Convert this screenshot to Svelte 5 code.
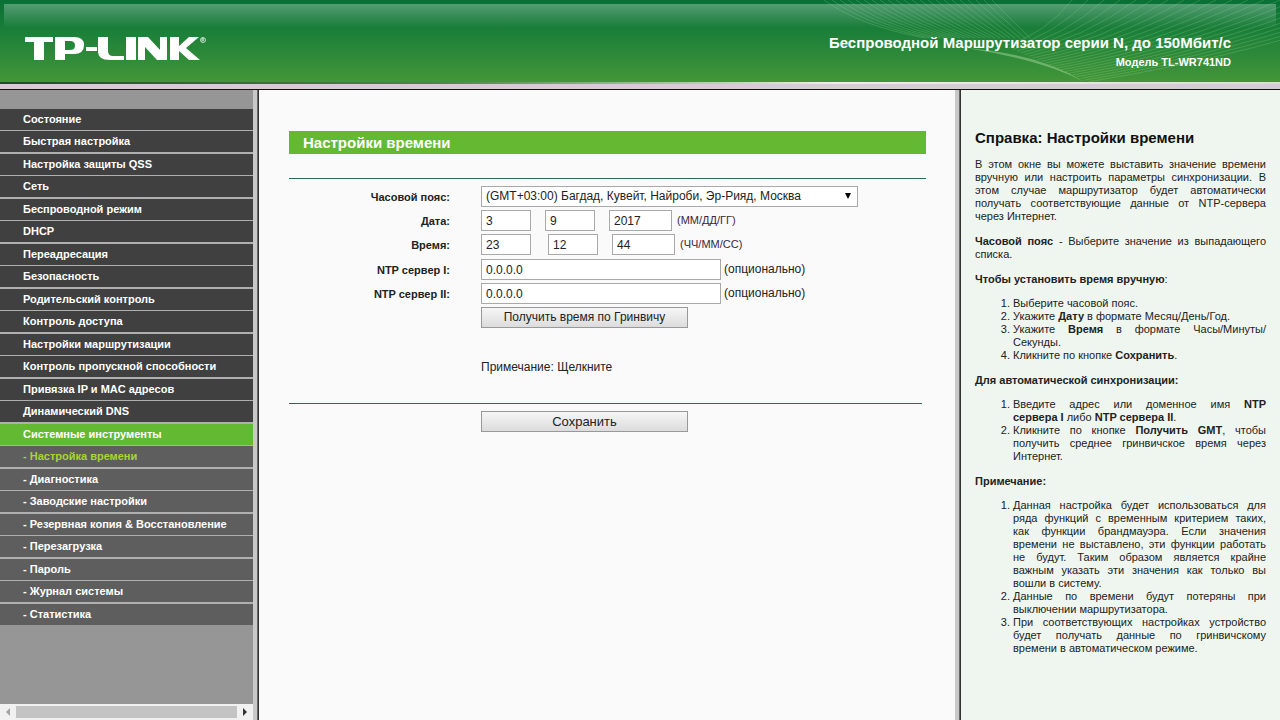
<script>
  const menu = [
    'Состояние', 'Быстрая настройка', 'Настройка защиты QSS', 'Сеть', 'Беспроводной режим', 'DHCP',
    'Переадресация', 'Безопасность', 'Родительский контроль', 'Контроль доступа',
    'Настройки маршрутизации', 'Контроль пропускной способности', 'Привязка IP и MAC адресов',
    'Динамический DNS', 'Системные инструменты'
  ];
  const submenu = [
    'Настройка времени', 'Диагностика', 'Заводские настройки', 'Резервная копия & Восстановление',
    'Перезагрузка', 'Пароль', 'Журнал системы', 'Статистика'
  ];
  const strands = Array.from({ length: 22 }, (_, i) => i);
</script>

<div class="page">
  <header>
    <div class="gloss"></div>
    <svg class="waves" viewBox="0 0 480 82" aria-hidden="true">
      <path class="fill" d="M165 48 C205 51 250 60 284 82 C262 70 220 56 165 48Z" />
      {#each strands as i}
        <path d={`M${24 + i * 8} 0 Q${60 + i * 7} ${26 - i / 2} ${125 + i * 5} 38`} />
        <path d={`M${205 + i * 4} ${46 + i * 1.7} Q${245 + i * 10} ${34 + i} ${272 + i * 16} 0`} />
      {/each}
    </svg>
    <svg class="logo" viewBox="0 0 182 26" role="img" aria-label="TP-LINK">
      <g fill="#fff">
        <path d="M0 1H28V6H19V24H9V6H0Z" />
        <path fill-rule="evenodd" d="M30 1H49Q59 1 59 9Q59 18 49 18H40V24H30ZM40 5V14H45Q50 14 50 9.500Q50 5 45 5Z" />
        <path d="M61 11H72V15H61Z" />
        <path d="M73 1H83V15Q83 20 88 20H99V24H85Q73 24 73 15Z" />
        <path d="M101 1H111V24H101Z" />
        <path d="M113 1H123L135 14V1H142V24H132L120 11V24H113Z" />
        <path d="M145 1H154V10L164 1H174L161 12L175 24H164L154 15V24H145Z" />
      </g>
      <circle cx="178" cy="4" r="2.500" fill="none" stroke="#fff" stroke-width=".7" />
      <path d="M177 5.500V2.500H178.500V4H177M178 4L179 5.500" fill="none" stroke="#fff" stroke-width=".6" />
    </svg>
    <div class="product">
      <strong class="name">Беспроводной Маршрутизатор серии N, до 150Мбит/с</strong>
      <strong class="model">Модель TL-WR741ND</strong>
    </div>
  </header>

  <div class="body">
    <aside>
      <nav>
        {#each menu as item, i}
          <a href="#menu" class:active={i === menu.length - 1}>{item}</a>
        {/each}
        {#each submenu as item, i}
          <a href="#submenu" class="sub" class:current={i === 0}>- {item}</a>
        {/each}
      </nav>
      <div class="scroll">
        <button aria-label="Влево"><svg width="4" height="8"><path d="M4 0V8L0 4Z" fill="#a3a3a3" /></svg></button>
        <div class="thumb"></div>
        <button aria-label="Вправо"><svg width="4" height="8"><path d="M0 0V8L4 4Z" fill="#333" /></svg></button>
      </div>
    </aside>
    <div class="divider"></div>

    <main>
      <h1>Настройки времени</h1>
      <form onsubmit={(e) => e.preventDefault()}>
        <div class="row">
          <label for="zone">Часовой пояс:</label>
          <div class="select">
            <select id="zone"><option>(GMT+03:00) Багдад, Кувейт, Найроби, Эр-Рияд, Москва</option></select>
            <svg width="6" height="6" aria-hidden="true"><path d="M0 0H6L3 6Z" /></svg>
          </div>
        </div>
        <div class="row">
          <label for="month">Дата:</label>
          <div class="fields">
            <div class="parts">
              <input id="month" value="3" />
              <input aria-label="День" value="9" />
              <input class="wide" aria-label="Год" value="2017" />
            </div>
            <span class="format">(ММ/ДД/ГГ)</span>
          </div>
        </div>
        <div class="row">
          <label for="hour">Время:</label>
          <div class="fields">
            <div class="parts time">
              <input id="hour" value="23" />
              <input aria-label="Минуты" value="12" />
              <input class="wide" aria-label="Секунды" value="44" />
            </div>
            <span class="format">(ЧЧ/ММ/СС)</span>
          </div>
        </div>
        <div class="row">
          <label for="ntp1">NTP сервер I:</label>
          <div class="fields"><input id="ntp1" class="server" value="0.0.0.0" /><span>(опционально)</span></div>
        </div>
        <div class="row">
          <label for="ntp2">NTP сервер II:</label>
          <div class="fields"><input id="ntp2" class="server" value="0.0.0.0" /><span>(опционально)</span></div>
        </div>
        <div class="row"><button class="push" type="button">Получить время по Гринвичу</button></div>
        <p class="note">Примечание: Щелкните</p>
        <hr />
        <div class="row"><button class="push save" type="submit">Сохранить</button></div>
      </form>
    </main>
    <div class="divider"></div>

    <section class="help">
      <h2>Справка: Настройки времени</h2>
      <p>В этом окне вы можете выставить значение времени вручную или настроить параметры синхронизации. В этом случае маршрутизатор будет автоматически получать соответствующие данные от NTP-сервера через Интернет.</p>
      <p><b>Часовой пояс</b> - Выберите значение из выпадающего списка.</p>
      <p class="lead"><b>Чтобы установить время вручную</b>:</p>
      <ol>
        <li>Выберите часовой пояс.</li>
        <li>Укажите <b>Дату</b> в формате Месяц/День/Год.</li>
        <li>Укажите <b>Время</b> в формате Часы/Минуты/<wbr />Секунды.</li>
        <li>Кликните по кнопке <b>Сохранить</b>.</li>
      </ol>
      <p class="lead"><b>Для автоматической синхронизации:</b></p>
      <ol>
        <li>Введите адрес или доменное имя <b>NTP сервера&nbsp;I</b>&nbsp;либо <b>NTP сервера II</b>.</li>
        <li>Кликните по кнопке <b>Получить GMT</b>, чтобы получить среднее гринвичское время через Интернет.</li>
      </ol>
      <p class="lead"><b>Примечание:</b></p>
      <ol>
        <li>Данная настройка будет использоваться для ряда функций с временным критерием таких, как&nbsp;функции брандмауэра. Если значения времени&nbsp;не выставлено, эти функции работать не&nbsp;будут. Таким образом является крайне важным&nbsp;указать эти значения как только вы вошли&nbsp;в&nbsp;систему.</li>
        <li>Данные по времени будут потеряны при выключении маршрутизатора.</li>
        <li>При соответствующих настройках устройство будет получать данные по гринвичскому времени в автоматическом режиме.</li>
      </ol>
    </section>
  </div>
</div>

<style>
  :global(body) { background: #fafafa; }
  .page {
    min-height: 100vh;
    display: flex;
    flex-direction: column;
    font-family: "Liberation Sans", Arial, sans-serif;
    font-size: 11px;
    color: #222;
  }
  .page *, .page { box-sizing: border-box; }
  header {
    position: relative;
    height: 90px;
    flex: none;
    display: flex;
    justify-content: space-between;
    align-items: flex-start;
    padding: 0 49px 0 25px;
    background: linear-gradient(#087035, #1c8039 40%, #439638 100%) 0 0 / 100% 82px no-repeat, #d6cdd2;
    border-bottom: 1px solid #111;
    overflow: hidden;
  }
  header::after {
    content: "";
    position: absolute;
    inset: 82px 0 auto 0;
    height: 2px;
    background: linear-gradient(90deg, #1d4d22, #4b8a45 35%, #e3f5dc 65%, #cfe6c9);
  }
  .gloss {
    position: absolute;
    inset: 4px 4px auto 4px;
    height: 24px;
    background: linear-gradient(rgba(255, 255, 255, 0.3), rgba(255, 255, 255, 0));
  }
  .waves {
    position: absolute;
    right: 0;
    top: 0;
    width: 480px;
    height: 82px;
    fill: none;
    stroke: #b5e8a8;
    stroke-opacity: 0.26;
    stroke-width: 0.8;
  }
  .waves .fill { fill: #a5d69b; fill-opacity: 0.5; stroke: none; }
  .logo { position: relative; width: 182px; height: 26px; margin-top: 36px; }
  .product {
    position: relative;
    display: flex;
    flex-direction: column;
    align-items: flex-end;
    padding-top: 33px;
    color: #fff;
  }
  .name { font-size: 15px; line-height: 20px; }
  .model { line-height: 18px; }

  .body { flex: 1; display: grid; grid-template-columns: 253px 6px 1fr 6px 319px; }
  .divider { background: linear-gradient(90deg, #c8c8c8 0 4px, #666 4px 5px, #333 5px 6px); }
  aside {
    display: flex;
    flex-direction: column;
    justify-content: space-between;
    padding-top: 19px;
    background: #969696;
  }
  nav { display: flex; flex-direction: column; }
  nav a {
    padding-left: 23px;
    line-height: 21px;
    font-weight: bold;
    color: #fff;
    text-decoration: none;
    background: #404040;
    border-bottom: 1px solid #b0b0b0;
  }
  nav a:nth-child(even) { border-bottom-width: 2px; }
  nav .active { background: #64b933; }
  nav .sub { background: #5e5e5e; }
  nav .sub:last-child { border-bottom-color: #969696; }
  nav .current { color: #a5d82e; }
  .scroll { display: flex; height: 16px; background: #f1f1f1; padding: 2px 0; }
  .scroll button {
    width: 16px;
    padding: 0;
    border: 0;
    background: none;
    display: flex;
    align-items: center;
    justify-content: center;
  }
  .thumb { flex: 1; background: #c3c3c3; }

  main { padding: 41px 29px 0 30px; background: #fafafa; }
  h1 {
    margin: 0 0 24px;
    padding-left: 14px;
    font-size: 15px;
    line-height: 23px;
    color: #fff;
    background: #64b933;
  }
  form { border-top: 1px solid #2c6b57; padding-top: 7px; }
  .row {
    display: grid;
    grid-template-columns: 161px 1fr;
    column-gap: 31px;
    align-items: center;
    margin-bottom: 3px;
  }
  .row:nth-child(3n) { margin-bottom: 4px; }
  .row label { text-align: right; font-weight: bold; }
  .row .push { grid-column: 2; width: 207px; }
  input, select, .push {
    height: 21px;
    padding: 0 4px;
    font: 12px/19px "Liberation Sans", Arial, sans-serif;
    color: #222;
    background: #fff;
    border: 1px solid #a9a9a9;
    border-radius: 0;
  }
  .push { background: linear-gradient(#f6f6f6, #dcdcdc); border-color: #999; }
  .row .save { font-size: 13px; }
  .select { position: relative; display: flex; width: 377px; }
  select { width: 100%; appearance: none; }
  .select svg { position: absolute; right: 7px; top: 7px; }
  .fields { display: flex; gap: 3px; }
  .parts { display: flex; gap: 14px; }
  .time input:first-child { margin-right: 3px; }
  .parts input { width: 50px; }
  .parts .wide { width: 63px; }
  .fields .server { width: 240px; }
  .fields span { font-size: 12px; line-height: 20px; }
  .fields .format { margin-left: 2px; font-size: 11px; color: #3c2540; }
  .note { margin: 32px 0 29px 192px; font-size: 12px; line-height: 14px; }
  hr { margin: 0 4px 7px 0; border: 0; border-top: 1px solid #2c6b57; }

  .help {
    padding: 38px 14px 0;
    background: #eff6f0;
    line-height: 13px;
    text-align: justify;
  }
  .help h2 { margin: 0 0 11px; font-size: 15px; line-height: 19px; color: #111; }
  .help p { margin: 0 0 12px; }
  .help .lead { margin-bottom: 11px; }
  .help ol { margin: 0 0 12px; padding-left: 38px; }
</style>
